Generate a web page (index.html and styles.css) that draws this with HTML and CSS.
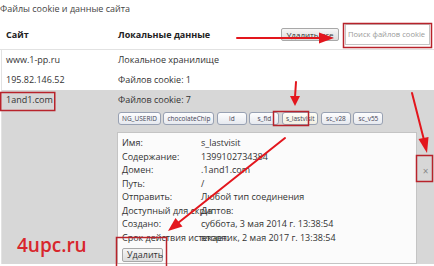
FILE: index.html
```html
<!DOCTYPE html>
<html>
	<head>
		<meta charset="utf-8">
		<title>Файлы cookie</title>
		<link rel="stylesheet" href="styles.css">
	</head>
	<body>
		<div class="page">
			<h1 class="title">Файлы cookie и данные сайта</h1>
			<div class="head">
				<div class="site">Сайт</div>
				<div class="data">Локальные данные</div>
				<div class="tools">
					<button class="btn all">Удалить все</button>
					<div class="search">Поиск файлов cookie</div>
				</div>
			</div>
			<div class="list">
				<div class="row">
					<div class="site">www.1-pp.ru</div>
					<div class="data">Локальное хранилище</div>
				</div>
				<div class="row">
					<div class="site">195.82.146.52</div>
					<div class="data">Файлов cookie: 1</div>
				</div>
				<div class="row sel">
					<div class="site">1and1.com</div>
					<div class="data">
						<div class="count">Файлов cookie: 7</div>
						<div class="chips">
							<span class="chip">NG_USERID</span>
							<span class="chip">chocolateChip</span>
							<span class="chip">id</span>
							<span class="chip">s_fid</span>
							<span class="chip on">s_lastvisit</span>
							<span class="chip">sc_v28</span>
							<span class="chip">sc_v55</span>
						</div>
						<div class="details">
							<div class="prop"><span class="k">Имя:</span><span class="v">s_lastvisit</span></div>
							<div class="prop"><span class="k">Содержание:</span><span class="v">1399102734384</span></div>
							<div class="prop"><span class="k">Домен:</span><span class="v">.1and1.com</span></div>
							<div class="prop"><span class="k">Путь:</span><span class="v">/</span></div>
							<div class="prop"><span class="k">Отправить:</span><span class="v">Любой тип соединения</span></div>
							<div class="prop"><span class="k">Доступный для скриптов:</span><span class="v">Да</span></div>
							<div class="prop"><span class="k">Создано:</span><span class="v">суббота, 3 мая 2014 г. 13:38:54</span></div>
							<div class="prop"><span class="k">Срок действия истекает:</span><span class="v">вторник, 2 мая 2017 г. 13:38:54</span></div>
							<button class="btn del">Удалить</button>
						</div>
					</div>
					<div class="close">×</div>
				</div>
			</div>

			<div class="mark">4upc.ru</div>

			<!-- пометки поверх скриншота -->
			<svg class="notes" width="434" height="266" viewBox="0 0 434 266">
				<g fill="none" stroke="#b8232b" stroke-width="1.5">
					<rect x="343.5" y="23.5" width="88" height="24"/>
					<rect x="0.75" y="92.5" width="54" height="18"/>
					<rect x="273.5" y="111.5" width="35" height="14"/>
					<rect x="416.5" y="155.5" width="16" height="26"/>
					<rect x="116.5" y="237.5" width="50" height="30"/>
				</g>
				<g stroke="#e3161d" stroke-width="2" stroke-linecap="round">
					<line x1="237" y1="38" x2="322" y2="38"/>
					<line x1="296" y1="82" x2="295" y2="97"/>
					<line x1="412" y1="93" x2="424" y2="140"/>
					<line x1="285" y1="138" x2="178" y2="223"/>
				</g>
				<g fill="#e3161d">
					<polygon points="334,38 319,32.5 319,43.5"/>
					<polygon points="295,106 290,96 300,96"/>
					<polygon points="427,153 418.5,139 428.5,137"/>
					<polygon points="168,231 175.5,218 182.5,226.5"/>
				</g>
			</svg>
		</div>
	</body>
</html>
```

FILE: styles.css
```css
body{
	margin: 0;
	font-family: "Open Sans", "Liberation Sans", sans-serif;
	font-size: 9px;
	color: #333;
	background: #fff;
}
.page{
	position: relative;
	width: 434px;
	height: 266px;
	overflow: hidden;
}
.title{
	margin: 2px 0 0 0;
	font-size: 9px;
	font-weight: normal;
	line-height: 14px;
	color: #444;
}
.head{
	display: flex;
	align-items: center;
	height: 29px;
	margin-top: 4px;
	padding-left: 6px;
	border-bottom: 1px solid #e2e2e2;
	font-weight: bold;
	color: #222;
}
.head .site{
	width: 112px;
}
.tools{
	display: flex;
	align-items: center;
	gap: 6px;
	margin-left: auto;
	margin-right: 4px;
}
.btn{
	height: 14px;
	padding: 0 4px;
	border: 1px solid #a8a8a8;
	border-radius: 2px;
	background: linear-gradient(#f6f6f6, #dcdcdc);
	font-family: inherit;
	font-size: 9px;
	line-height: 12px;
	color: #333;
	white-space: nowrap;
}
.btn.all{
	width: 58px;
	height: 13px;
	padding: 0 2px;
	font-size: 8px;
	font-weight: normal;
	line-height: 11px;
	overflow: hidden;
}
.search{
	width: 85px;
	height: 21px;
	box-sizing: border-box;
	padding-left: 2px;
	border: 1px solid #c4c4c4;
	font-size: 7.6px;
	font-weight: normal;
	line-height: 19px;
	color: #9a9a9a;
	white-space: nowrap;
}
.list{
	margin-left: 1px;
	border-left: 1px solid #e2e2e2;
}
.row{
	display: grid;
	grid-template-columns: 116px 1fr;
	height: 20px;
	line-height: 20px;
}
.row .site{
	padding-left: 4px;
}
.row.sel{
	grid-template-columns: 116px 1fr 17px;
	height: auto;
	line-height: 13px;
	padding-top: 3px;
	background: #d7d7d7;
}
.count{
	height: 13px;
}
.chips{
	display: flex;
	gap: 2.5px;
	margin-top: 6px;
}
.chip{
	min-width: 30px;
	height: 13px;
	box-sizing: border-box;
	padding: 0 3px;
	border: 1px solid #98a1b3;
	border-radius: 3px;
	background: linear-gradient(#fdfdfe, #e6e9ef);
	font-size: 6.5px;
	line-height: 11px;
	text-align: center;
	color: #445;
}
.chip.on{
	background: linear-gradient(#fffef6, #f1efe2);
}
.details{
	margin: 7px 0 0 -1px;
	padding: 3px 4px 1px 4px;
	border: 1px solid #c4c4c4;
	background: #fbfbfb;
}
.prop{
	display: flex;
	height: 13.5px;
	line-height: 13.5px;
	white-space: nowrap;
}
.prop .k{
	width: 79px;
	flex: none;
	overflow: visible;
}
.prop .v{
	position: relative;
}
.btn.del{
	display: block;
	width: 41px;
	margin-top: 4px;
}
.close{
	padding-top: 72px;
	line-height: 12px;
	text-align: center;
	font-size: 10px;
	color: #888;
}
.mark{
	position: absolute;
	left: 17px;
	top: 232px;
	font-size: 19px;
	font-weight: 600;
	line-height: 26px;
	color: #d8262c;
}
.notes{
	position: absolute;
	left: 0;
	top: 0;
	pointer-events: none;
}
```
